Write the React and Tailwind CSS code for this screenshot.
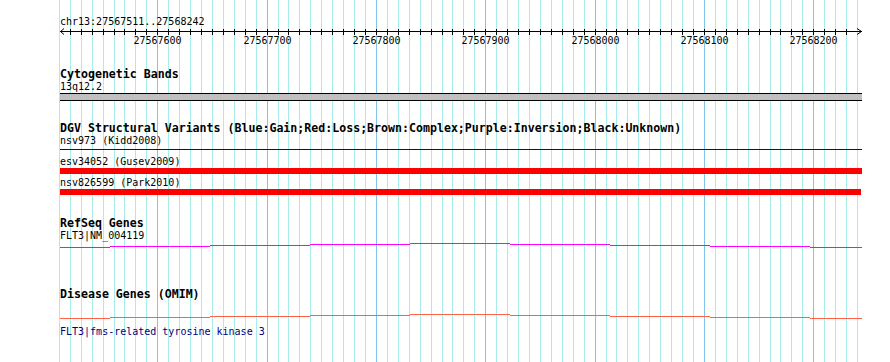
import React from 'react'

const START = 27567510
const END = 27568240
const PX = 1.0933
const X0 = 58.9
const bpX = (p) => Math.round(X0 + (p - START) * PX)

const mono = { fontFamily: '"DejaVu Sans Mono", "Liberation Mono", monospace' }

// grid / ruler positions, one every 10 bp
const gridPos = []
for (let p = START; p <= END; p += 10) gridPos.push(p)
const majors = [27567600, 27567700, 27567800, 27567900, 27568000, 27568100, 27568200]

const steps = [60, 110, 210, 310, 410, 510, 610, 710, 810, 862]
const levels = [5, 4, 3, 2, 1, 2, 3, 4, 5]

function Grid() {
  return (
    <svg className="absolute inset-0" width={890} height={362}>
      {gridPos.map((p) => {
        const x = bpX(p) + 0.5
        const major = p % 100 === 0
        return (
          <line key={p} x1={x} x2={x} y1={0} y2={362}
            stroke={major ? '#82c4ea' : '#a8ecec'} strokeWidth={1} />
        )
      })}
    </svg>
  )
}

function Ruler() {
  return (
    <div className="relative h-[19px] w-[890px]">
      <svg className="absolute inset-0" width={890} height={19}>
        <line x1={60} x2={862} y1={3.5} y2={3.5} stroke="#000" />
        {gridPos.filter((p) => p > START && p < END).map((p) => {
          const x = bpX(p) + 0.5
          return <line key={p} x1={x} x2={x} y1={1} y2={7} stroke="#000" />
        })}
        <polyline points="64,0.5 60.5,3.5 64,6.5" fill="none" stroke="#000" />
        <polyline points="857,0.5 861.5,3.5 857,6.5" fill="none" stroke="#000" />
      </svg>
      {majors.map((p) => (
        <span key={p} className="absolute top-[6px] -translate-x-1/2 text-[10px] leading-[13px] text-black" style={{ ...mono, left: bpX(p) + 0.5 }}>
          {p}
        </span>
      ))}
    </div>
  )
}

function StepLine({ color }) {
  return (
    <svg className="block" width={890} height={7}>
      {levels.map((lv, i) => (
        <rect key={i} x={steps[i]} y={lv} width={steps[i + 1] - steps[i]} height={1} fill={color} />
      ))}
    </svg>
  )
}

function Title({ children, className = '' }) {
  return (
    <div className={'pl-[60px] text-[11.6px] font-bold leading-[13px] text-black whitespace-nowrap overflow-visible ' + className} style={mono}>
      {children}
    </div>
  )
}

function Label({ children, className = '' }) {
  return (
    <div className={'pl-[60px] h-[13px] text-[10px] leading-[13px] whitespace-nowrap ' + className} style={mono}>
      {children}
    </div>
  )
}

export default function App() {
  return (
    <div className="relative w-[890px] h-[362px] overflow-hidden bg-white">
      <Grid />
      <div className="relative">
        <Label className="pt-[15px] h-[28px] text-black">chr13:27567511..27568242</Label>
        <Ruler />

        <Title className="mt-[21px] h-[12px]">Cytogenetic Bands</Title>
        <Label className="text-black">13q12.2</Label>
        <div className="ml-[60px] w-[802px] h-[8px] border-y border-black bg-[#c0c0c0]" />

        <Title className="mt-[21px] h-[12px]">DGV Structural Variants (Blue:Gain;Red:Loss;Brown:Complex;Purple:Inversion;Black:Unknown)</Title>
        <Label className="text-black">nsv973 (Kidd2008)</Label>
        <div className="ml-[60px] mt-[2px] w-[802px] h-px bg-[#0000c8]" />
        <Label className="mt-[5px] text-black">esv34052 (Gusev2009)</Label>
        <div className="ml-[60px] w-[802px] h-[6px] bg-[#ff0000]" />
        <Label className="mt-[2px] text-black">nsv826599 (Park2010)</Label>
        <div className="ml-[60px] w-[801px] h-[6px] bg-[#ff0000]" />

        <Title className="mt-[22px] h-[12px]">RefSeq Genes</Title>
        <Label className="text-black">FLT3|NM_004119</Label>
        <StepLine color="#ff00ff" />

        <Title className="mt-[39px] h-[13px]">Disease Genes (OMIM)</Title>
        <div className="mt-[12px]">
          <StepLine color="#ff6347" />
        </div>
        <Label className="mt-[5px] text-[#000080]">FLT3|fms-related tyrosine kinase 3</Label>
      </div>
    </div>
  )
}
